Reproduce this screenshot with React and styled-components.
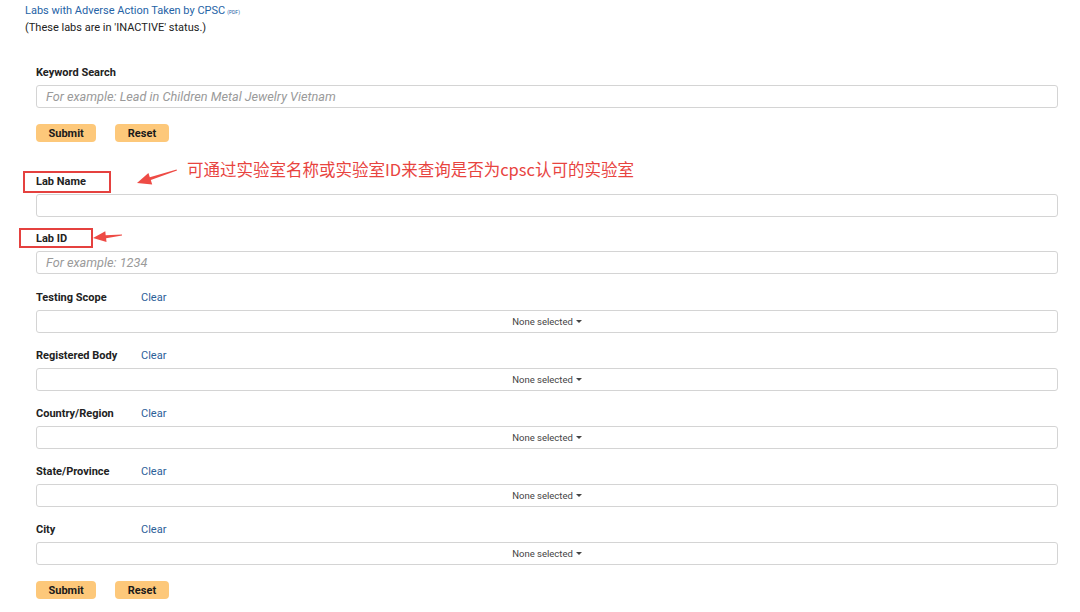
import React from "react"
import styled, { createGlobalStyle } from "styled-components"

const Global = createGlobalStyle`
  body {
    margin: 0;
    background: #fff;
    font-family: Roboto, "Liberation Sans", Arial, sans-serif;
    color: #222;
  }
`

const Page = styled.div`
  width: 1080px;
  height: 612px;
  overflow: hidden;
`

const Notice = styled.div`
  padding: 3px 0 0 25px;
  font-size: 11px;
  line-height: 15px;
`

const TitleLink = styled.a`
  color: #2563a6;
  text-decoration: none;
`

const Pdf = styled.span`
  font-size: 5px;
  color: #2563a6;
  margin-left: 2px;
`

const Form = styled.div`
  padding: 31px 22px 0 36px;
`

const Field = styled.div`
  position: relative;
  margin-bottom: ${p => p.$gap ?? 16}px;
`

const LabelRow = styled.div`
  display: flex;
  align-items: center;
  height: 13px;
  margin-bottom: 6px;
`

const Label = styled.label`
  font-size: 11px;
  font-weight: 700;
  color: #222;
  width: ${p => (p.$wide ? "auto" : "105px")};
`

const ClearLink = styled.a`
  font-size: 11px;
  color: #2b6098;
  cursor: pointer;
`

const Input = styled.input`
  box-sizing: border-box;
  display: block;
  width: 100%;
  height: 23px;
  border: 1px solid #d4d4d4;
  border-radius: 3px;
  padding: 0 9px;
  font-family: Roboto, "Liberation Sans", Arial, sans-serif;
  font-size: 12.7px;
  outline: none;
  &::placeholder {
    color: #9a9a9a;
    font-style: italic;
  }
`

const Select = styled.button`
  box-sizing: border-box;
  display: flex;
  align-items: center;
  justify-content: center;
  gap: 3px;
  width: 100%;
  height: 23px;
  background: #fff;
  border: 1px solid #d4d4d4;
  border-radius: 3px;
  font-family: Roboto, "Liberation Sans", Arial, sans-serif;
  font-size: 9.5px;
  color: #444;
  padding: 0;
`

const Caret = styled.span`
  width: 0;
  height: 0;
  border-left: 3px solid transparent;
  border-right: 3px solid transparent;
  border-top: 3px solid #444;
`

const Buttons = styled.div`
  display: flex;
  gap: 19px;
  margin-bottom: ${p => p.$gap ?? 0}px;
`

const Button = styled.button`
  height: 18px;
  padding: 0 12.5px;
  border: none;
  border-radius: 4px;
  background: #fdc87a;
  font-family: Roboto, "Liberation Sans", Arial, sans-serif;
  font-size: 11px;
  font-weight: 700;
  color: #1a1a1a;
`

const MarkBox = styled.div`
  position: absolute;
  left: ${p => p.$left}px;
  top: ${p => p.$top}px;
  width: ${p => p.$w}px;
  height: ${p => p.$h}px;
  box-sizing: border-box;
  border: 2px solid #e5413f;
`

const Arrow = styled.svg`
  position: absolute;
  left: ${p => p.$left}px;
  top: ${p => p.$top}px;
`

const Note = styled.div`
  position: absolute;
  left: 151px;
  top: -18px;
  font-family: "Noto Sans CJK SC", "Noto Sans", sans-serif;
  font-size: 16.5px;
  color: #e8443f;
  white-space: nowrap;
`

function Dropdown({ label }) {
  return (
    <Field>
      <LabelRow>
        <Label>{label}</Label>
        <ClearLink>Clear</ClearLink>
      </LabelRow>
      <Select>
        None selected <Caret />
      </Select>
    </Field>
  )
}

export default function App() {
  const scopes = ["Testing Scope", "Registered Body", "Country/Region", "State/Province", "City"]

  return (
    <Page>
      <Global />
      <Notice>
        <TitleLink href="#">Labs with Adverse Action Taken by CPSC</TitleLink>
        <Pdf>(PDF)</Pdf>
        <div>(These labs are in 'INACTIVE' status.)</div>
      </Notice>

      <Form>
        <Field>
          <LabelRow>
            <Label $wide>Keyword Search</Label>
          </LabelRow>
          <Input placeholder="For example: Lead in Children Metal Jewelry Vietnam" />
        </Field>

        <Buttons $gap={33}>
          <Button>Submit</Button>
          <Button>Reset</Button>
        </Buttons>

        <Field $gap={15}>
          <LabelRow>
            <Label $wide>Lab Name</Label>
          </LabelRow>
          <Input />
          <MarkBox $left={-13} $top={-4} $w={88} $h={22} />
          <Arrow $left={99} $top={-12} width="46" height="24" viewBox="0 0 46 24">
            <polygon
              points="2,20 17.2,21.4 15.8,17.1 42,7.6 41.6,6.4 14.8,14.3 13.4,10"
              fill="#ee4b45"
            />
          </Arrow>
          <Note>可通过实验室名称或实验室ID来查询是否为cpsc认可的实验室</Note>
        </Field>

        <Field $gap={17}>
          <LabelRow>
            <Label $wide>Lab ID</Label>
          </LabelRow>
          <Input placeholder="For example: 1234" />
          <MarkBox $left={-17} $top={-4} $w={74} $h={20} />
          <Arrow $left={56} $top={-4} width="32" height="16" viewBox="0 0 32 16">
            <polygon
              points="1,10 14.5,14.1 14.1,10.2 30,7.6 30,6.4 13.7,7.2 13.3,3.2"
              fill="#ee4b45"
            />
          </Arrow>
        </Field>

        {scopes.map(s => (
          <Dropdown key={s} label={s} />
        ))}

        <Buttons>
          <Button>Submit</Button>
          <Button>Reset</Button>
        </Buttons>
      </Form>
    </Page>
  )
}
